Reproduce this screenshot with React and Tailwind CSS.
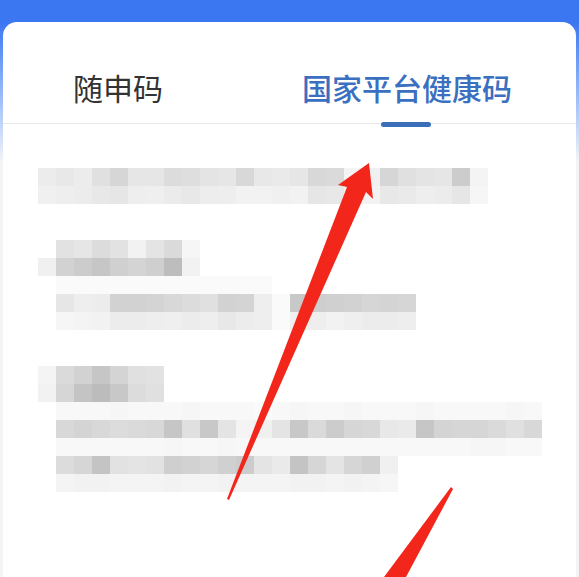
import React from "react";

// pixelated (blurred-out) info rows, one entry per 18px mosaic row
const MOSAIC = [
  { s: 0, c: "ec e8 ec e0 d6 e6 e6 dc de e4 e6 d8 e8 ea e6 d8 da f4 f0 d6 e0 e4 e6 cc f4" },
  { s: 0, c: "f0 ee ec e8 e6 ee ef eb e8 ed ee f2 f2 f0 f2 e6 e8 f2 f2 e8 ea ee ec e6 f6" },
  { s: 0, c: "" },
  { s: 0, c: "" },
  { s: 1, c: "e2 e6 dc e2 f2 e4 da f6" },
  { s: 0, c: "f0 d2 cc c6 d0 d4 cf bd f2" },
  { s: 1, c: "fa fa fa fa fa fa fa fa fa fa fa fa" },
  { s: 1, c: "e6 ee ec d2 d2 d4 d8 dc e0 d2 d4 ee fa c8 ce d0 d2 d6 d4 d6" },
  { s: 1, c: "f6 f4 f2 ec ec ee ef ec ee e8 ec ee fa f0 ee f2 ef ec ec ee" },
  { s: 0, c: "" },
  { s: 0, c: "" },
  { s: 0, c: "f4 da d2 c6 d4 e0 e2" },
  { s: 0, c: "f2 d6 c4 bc c8 dc e0" },
  { s: 1, c: "f8 f8 f8 f6 f8 f8 f8 f6 f8 f8 f8 fa f8 f6 f8 f8 f6 f8 f8 f8 f6 f8 f8 f8 f8 f6 f8" },
  { s: 1, c: "d8 d4 d8 dc da d8 c6 e0 c8 e4 f4 f0 e4 c8 da cc d6 d8 e8 ea c6 d4 d6 d6 da e0 d8" },
  { s: 1, c: "f8 f8 f8 f8 f8 f8 f6 f8 f8 f6 f8 f8 f8 f8 f8 f8 f8 f8 f8 f8 f8 f8 f8 f6 f6 f8 f8" },
  { s: 1, c: "dc d6 c4 e2 e4 e2 cf d2 d6 d0 cc e4 ea c4 d6 e4 d6 d0 f0" },
  { s: 1, c: "f4 f2 f2 f4 f4 f4 f2 f4 f4 f2 f4 f4 f4 f2 f2 f4 f2 f4 f6" },
];

function Mosaic() {
  return (
    <div className="pt-[44px] pl-[35px]">
      {MOSAIC.map((row, i) => (
        <div key={i} className="flex h-[18px]" style={{ paddingLeft: row.s * 18 }}>
          {row.c
            .split(" ")
            .filter(Boolean)
            .map((v, j) => (
              <div
                key={j}
                className="w-[18px] h-[18px] shrink-0"
                style={{ backgroundColor: `#${v}${v}${v}` }}
              />
            ))}
        </div>
      ))}
    </div>
  );
}

export default function App() {
  return (
    <div
      className="relative w-full h-[577px] overflow-hidden pt-[22px] px-[3px] bg-linear-to-b from-[#3b77f1] from-[4%] to-[#f3f4f6] to-[28%]"
      style={{ fontFamily: '"Noto Sans CJK SC", "Noto Sans", sans-serif' }}
    >
      <div className="h-full bg-white rounded-t-[14px]">
        {/* tabs */}
        <div className="relative flex h-[102px] border-b border-[#e8e8e8]">
          <div className="pl-[70px] pt-[47px] leading-[36px] text-[30px] text-[#333333]">
            随申码
          </div>
          <div className="ml-[139px] pt-[47px] leading-[36px] text-[30px] font-medium text-[#3b6fc0]">
            国家平台健康码
          </div>
          <div className="absolute left-[378px] top-[100px] w-[50px] h-[5px] rounded-full bg-[#3a6eb9]" />
        </div>

        <Mosaic />
      </div>

      {/* red annotation arrows */}
      <svg
        className="absolute left-0 top-0 pointer-events-none"
        width="579"
        height="577"
        viewBox="0 0 579 577"
      >
        <polygon
          points="369,163 373,199 366,192 229,500 227,499 347,187 338,185"
          fill="#f3261b"
        />
        <polygon points="451,487 453,489 406,577 384,577" fill="#f3261b" />
      </svg>
    </div>
  );
}
